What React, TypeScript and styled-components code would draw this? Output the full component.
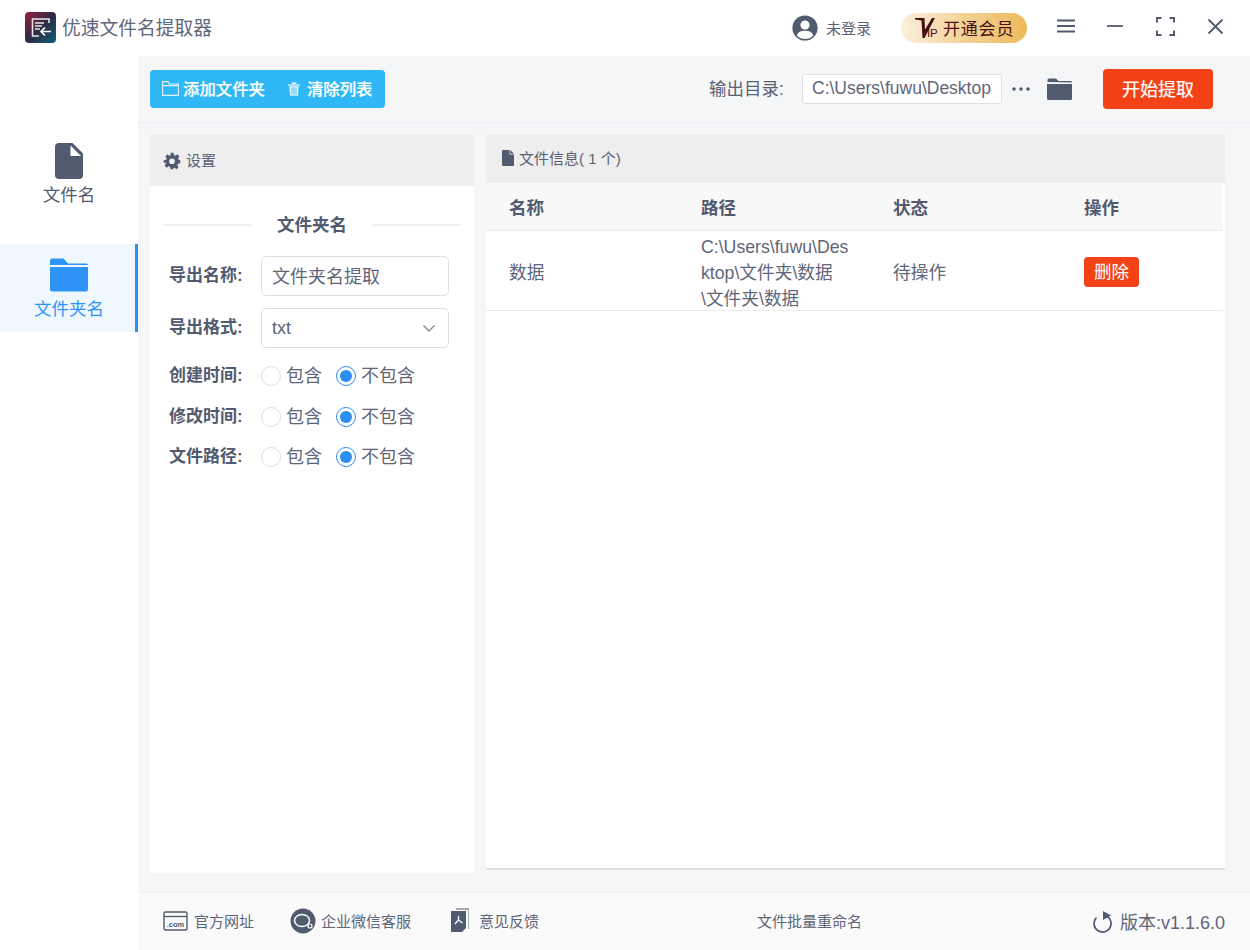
import React from 'react';
import styled, { createGlobalStyle } from 'styled-components';

const Global = createGlobalStyle`
  html, body { margin: 0; padding: 0; background: #fff; }
  * { box-sizing: border-box; }
  body { font-family: "Liberation Sans", "Noto Sans CJK SC", sans-serif; color: #515a6e; overflow: hidden; }
`;

const Win = styled.div`width: 1250px; height: 950px; display: flex; flex-direction: column; background: #fff;`;
const TitleBar = styled.header`height: 56px; flex: none; display: flex; align-items: center; padding: 0 26px 0 25px; background: #fff;`;
const Logo = styled.svg`width: 31px; height: 31px; flex: none; margin-top: -1px;`;
const AppName = styled.div`font-size: 18.75px; color: #60667a; margin-left: 6px; margin-top: -3px;`;
const UserIcon = styled.svg`width: 26px; height: 26px; margin-left: auto; flex: none; margin-top: -1px;`;
const UserName = styled.span`font-size: 15px; color: #5c6376; margin-left: 8px; width: 45px; white-space: nowrap; margin-top: -2px;`;
const VipPill = styled.div`
  width: 126px; height: 30px; margin-left: 30px; margin-top: -1px; border-radius: 15px; display: flex; align-items: center; padding-left: 14px;
  background: linear-gradient(90deg, #fbf0dd 0%, #f2cf8f 55%, #eeb95b 100%); color: #4a0f14;
`;
const VipMark = styled.svg`width: 20px; height: 20px; flex: none; margin-top: 1px;`;
const VipIp = styled.span`font-size: 11.5px; line-height: 1; align-self: flex-end; margin: 0 0 3px -8px; width: 11px; letter-spacing: -0.3px;`;
const VipText = styled.span`font-size: 17px; margin-left: 5px; letter-spacing: 0.8px; white-space: nowrap; margin-top: -1px;`;
const WinBtn = styled.svg<{ $ml: number; $w: number }>`
  width: ${p => p.$w}px; height: ${p => p.$w}px; margin-left: ${p => p.$ml}px; margin-top: -4px; flex: none;
`;

const Body = styled.div`flex: 1; display: flex; min-height: 0;`;
const Sidebar = styled.nav`width: 138px; flex: none; background: #fff; padding-top: 84px;`;
const NavItem = styled.div<{ $active?: boolean; $h: number; $pt: number }>`
  height: ${p => p.$h}px; padding-top: ${p => p.$pt}px; display: flex; flex-direction: column; align-items: center;
  padding-left: 3px;
  font-size: 17.5px; line-height: 24px;
  color: ${p => (p.$active ? '#2f94f8' : '#515a6e')};
  background: ${p => (p.$active ? '#eff8ff' : 'transparent')};
  border-right: 3px solid ${p => (p.$active ? '#2f8ff0' : 'transparent')};
`;
const NavFile = styled.svg`width: 28px; height: 36px; margin-bottom: 4px; display: block;`;
const NavFolder = styled.svg`width: 38px; height: 34px; margin-bottom: 5px; display: block;`;

const Main = styled.main`flex: 1; min-width: 0; display: flex; flex-direction: column; background: #f5f6f8;`;
const Toolbar = styled.div`height: 67px; flex: none; display: flex; align-items: center; padding: 0 37px 0 12px; border-bottom: 1px solid #eceef1;`;
const BlueGroup = styled.div`
  width: 235px; height: 38px; background: #30b8f6; border-radius: 4px; display: flex; align-items: center; padding-left: 12px;
  color: #fff; font-size: 16.4px; font-weight: 500; margin-top: -1px;
`;
const BlueIconFolder = styled.svg`width: 17px; height: 15px; flex: none; margin-right: 4px;`;
const BlueIconTrash = styled.svg`width: 12px; height: 14px; flex: none; margin-left: 23px; margin-right: 7px;`;
const BlueLabel = styled.span`white-space: nowrap; -webkit-text-stroke: 0.2px #fff; margin-top: -2px;`;
const OutLabel = styled.span`margin-left: auto; font-size: 17.5px; color: #5a6175; white-space: nowrap; width: 93px; margin-top: -4px;`;
const OutPath = styled.div`
  width: 200px; height: 30px; background: #fff; border: 1px solid #dcdfe6; border-radius: 3px; font-size: 17.5px; color: #5f6679;
  display: flex; align-items: center; padding: 0 0 1px 9px; white-space: nowrap; overflow: hidden;
`;
const Dots = styled.svg`width: 20px; height: 6px; margin-left: 9px; flex: none;`;
const OutFolder = styled.svg`width: 25px; height: 22px; margin-left: 16px; flex: none;`;
const StartBtn = styled.div`
  width: 110px; height: 40px; background: #f24216; border-radius: 4px; color: #fff; font-size: 18px; padding-bottom: 2px;
  -webkit-text-stroke: 0.2px #fff;
  display: flex; align-items: center; justify-content: center; margin-left: 31px; margin-top: -1px;
`;

const Content = styled.div`flex: 1; min-height: 0; display: flex; gap: 12px; padding: 12px 25px 19px 12px;`;
const SetPanel = styled.section`width: 324px; flex: none; background: #fff; display: flex; flex-direction: column;`;
const InfoPanel = styled.section`flex: 1; min-width: 0; background: #fff; display: flex; flex-direction: column; border-bottom: 2px solid #dfe0e6; margin-bottom: 3px;`;
const PanelHead = styled.div<{ $h: number; $pl: number }>`
  height: ${p => p.$h}px; flex: none; background: #eee; display: flex; align-items: center; padding-left: ${p => p.$pl}px;
  font-size: 15px; color: #5a6175; white-space: pre;
`;
const HeadText = styled.span`margin-top: -3px;`;
const GearIcon = styled.svg`width: 18px; height: 18px; margin-right: 5px; flex: none;`;
const SmallFile = styled.svg`width: 12px; height: 16px; margin-right: 5px; margin-top: -3px; flex: none;`;

const Form = styled.div`padding: 25px 13px 0;`;
const DivTitle = styled.div`
  display: flex; align-items: center; gap: 25px; font-size: 17.5px; font-weight: 700; color: #515a6e; line-height: 28px; margin-bottom: 17px;
  white-space: nowrap;
  &::before, &::after { content: ''; flex: 1; height: 2px; background: #eeeff1; margin-top: -1px; }
`;
const FieldRow = styled.div<{ $mb: number; $h: number }>`display: flex; align-items: center; height: ${p => p.$h}px; margin-bottom: ${p => p.$mb}px; padding-left: 6px;`;
const FieldLabel = styled.label`width: 92px; flex: none; font-size: 17px; font-weight: 700; color: #515a6e; white-space: nowrap; margin-top: -5px;`;
const TextBox = styled.div<{ $lift?: boolean }>`
  width: 188px; height: 40px; border: 1px solid #dcdee2; border-radius: 5px; background: #fff; font-size: 18px; color: #5f6679;
  display: flex; align-items: center; padding: 0 10px ${p => (p.$lift ? 2 : 0)}px;
`;
const Chevron = styled.svg`width: 14px; height: 14px; margin-left: auto; margin-right: 2px; flex: none;`;
const Radio = styled.span<{ $on?: boolean }>`
  width: 20px; height: 20px; border-radius: 50%; flex: none; background: #fff; border: 1px solid ${p => (p.$on ? '#2d8cf0' : '#dcdee2')};
  display: flex; align-items: center; justify-content: center;
  &::after { content: ''; width: 12px; height: 12px; border-radius: 50%; background: ${p => (p.$on ? '#2d8cf0' : 'transparent')}; }
`;
const RadioText = styled.span<{ $w: number }>`font-size: 18px; color: #5f6679; margin-left: 5px; width: ${p => p.$w}px; white-space: nowrap; margin-top: -4px;`;

const Table = styled.div`width: 737px;`;
const Row = styled.div<{ $h: number; $head?: boolean }>`
  display: grid; grid-template-columns: 192px 192px 191px 162px; height: ${p => p.$h}px; align-items: center;
  background: ${p => (p.$head ? '#f8f8f9' : '#fff')}; border-bottom: 1px solid #e8eaec;
  font-size: ${p => (p.$head ? 17.5 : 17.7)}px; font-weight: ${p => (p.$head ? 700 : 400)}; color: ${p => (p.$head ? '#515a6e' : '#5f6679')};
`;
const Cell = styled.div`padding-left: 23px; padding-right: 20px; line-height: 26px; word-break: break-all; margin-top: 3px;`;
const OpCell = styled(Cell)`margin-top: 0;`;
const DelBtn = styled.span`
  display: inline-flex; width: 55px; height: 30px; background: #f24216; border-radius: 4px; color: #fff; align-items: center; justify-content: center; font-size: 17.5px;
`;

const Footer = styled.footer`
  height: 58px; flex: none; background: #fafafa; border-top: 1px solid #eceef1; display: flex; align-items: center; padding: 0 25px 2px 25px;
  font-size: 15px; color: #5f6679;
`;
const FootLink = styled.div<{ $w: number }>`display: flex; align-items: center; width: ${p => p.$w}px; white-space: nowrap;`;
const FootIcon = styled.svg<{ $w: number; $mr: number }>`width: ${p => p.$w}px; height: 26px; margin-right: ${p => p.$mr}px; flex: none;`;
const FootTitle = styled.div`white-space: nowrap;`;
const Version = styled.div`margin-left: auto; display: flex; align-items: center; font-size: 18px; white-space: nowrap;`;
const VerIcon = styled.svg`width: 20px; height: 22px; margin-right: 7px; flex: none; margin-top: 2px;`;

const C = '#515a6e';

const RadioRow = ({ label }: { label: string }) => (
  <FieldRow $h={30} $mb={10.5}>
    <FieldLabel>{label}</FieldLabel>
    <Radio />
    <RadioText $w={50}>包含</RadioText>
    <Radio $on />
    <RadioText $w={60}>不包含</RadioText>
  </FieldRow>
);

export default function App() {
  return (
    <Win>
      <Global />
      <TitleBar>
        <Logo viewBox="0 0 31 31">
          <defs>
            <linearGradient id="lg" x1="0" y1="0" x2="1" y2="1">
              <stop offset="0" stopColor="#9a1f3e" />
              <stop offset="0.5" stopColor="#2e2b42" />
              <stop offset="1" stopColor="#0f6078" />
            </linearGradient>
          </defs>
          <rect width="31" height="31" rx="4" fill="url(#lg)" />
          <path d="M24 11V7H7.5v17H14" fill="none" stroke="#e9e6ea" strokeWidth="1.6" />
          <path d="M10 11h9M10 14h7M10 17h5" stroke="#e9e6ea" strokeWidth="1.7" />
          <path d="M26 19.5H16M20 15.5l-4 4 4 4" fill="none" stroke="#fff" strokeWidth="1.7" />
        </Logo>
        <AppName>优速文件名提取器</AppName>
        <UserIcon viewBox="0 0 26 26">
          <circle cx="13" cy="13" r="12.6" fill={C} />
          <circle cx="13" cy="10" r="4.6" fill="#fff" />
          <path d="M4.8 20.5C6 16.8 9 15.8 13 15.8s7 1 8.2 4.7C19 23 16.200 24 13 24s-6-1-8.200-3.500z" fill="#fff" />
        </UserIcon>
        <UserName>未登录</UserName>
        <VipPill>
          <VipMark viewBox="0 0 20 20">
            <path d="M0 0h9.500l.5 11.500L17 0h3L9.500 20H7.500L6.500 2.500 0 1.500z" fill="#4a0f14" />
          </VipMark>
          <VipIp>IP</VipIp>
          <VipText>开通会员</VipText>
        </VipPill>
        <WinBtn $ml={29} $w={20} viewBox="0 0 20 20">
          <path d="M1 4.500h18M1 10h18M1 15.500h18" stroke={C} strokeWidth="1.800" fill="none" />
        </WinBtn>
        <WinBtn $ml={30} $w={18} viewBox="0 0 18 18">
          <path d="M1 9h16" stroke={C} strokeWidth="1.800" />
        </WinBtn>
        <WinBtn $ml={32} $w={19} viewBox="0 0 19 19">
          <path d="M1 5.500V1h4.500M13.500 1H18v4.500M18 13.500V18h-4.500M5.500 18H1v-4.500" fill="none" stroke={C} strokeWidth="2" />
        </WinBtn>
        <WinBtn $ml={32} $w={17} viewBox="0 0 17 17">
          <path d="M1.500 1.500l14 14M15.500 1.500l-14 14" stroke={C} strokeWidth="1.800" />
        </WinBtn>
      </TitleBar>
      <Body>
        <Sidebar>
          <NavItem $h={104} $pt={3}>
            <NavFile viewBox="0 0 28 36">
              <path d="M4 0h13.500L28 10.500V32a4 4 0 0 1-4 4H4a4 4 0 0 1-4-4V4a4 4 0 0 1 4-4z" fill={C} />
              <path d="M15.500 2.500L26 13H15.500z" fill="#fff" />
            </NavFile>
            文件名
          </NavItem>
          <NavItem $active $h={88} $pt={14}>
            <NavFolder viewBox="0 0 38 34">
              <path d="M0 7V2.500A2 2 0 0 1 2 .5h11.500l4.500 5h18a2 2 0 0 1 2 2V7z" fill="#2f94f8" />
              <path d="M0 9h38v22.500a2 2 0 0 1-2 2H2a2 2 0 0 1-2-2z" fill="#2f94f8" />
            </NavFolder>
            文件夹名
          </NavItem>
        </Sidebar>
        <Main>
          <Toolbar>
            <BlueGroup>
              <BlueIconFolder viewBox="0 0 17 15">
                <path d="M.6 1.500V14.400h15.800V3H7.500L6 .6H.6zM.6 4.600h15.800" fill="none" stroke="#dff4ff" strokeWidth="1.100" />
              </BlueIconFolder>
              <BlueLabel>添加文件夹</BlueLabel>
              <BlueIconTrash viewBox="0 0 12 14">
                <path d="M0 2.500h12v1H0zM4 .5h4v1.500H4zM1.500 4.300h9l-.7 9.200H2.200z" fill="#dff4ff" stroke="#dff4ff" strokeWidth=".3" />
                <path d="M4 5.500v7M6 5.500v7M8 5.500v7" stroke="#30b8f6" strokeWidth=".8" />
              </BlueIconTrash>
              <BlueLabel>清除列表</BlueLabel>
            </BlueGroup>
            <OutLabel>输出目录:</OutLabel>
            <OutPath>C:\Users\fuwu\Desktop</OutPath>
            <Dots viewBox="0 0 20 6">
              <circle cx="3" cy="3" r="1.800" fill={C} />
              <circle cx="10" cy="3" r="1.800" fill={C} />
              <circle cx="17" cy="3" r="1.800" fill={C} />
            </Dots>
            <OutFolder viewBox="0 0 25 22">
              <path d="M.5 4V2A1.500 1.500 0 0 1 2 .5h7L11.500 3H23.500A1.500 1.500 0 0 1 25 4.500z" fill={C} />
              <path d="M0 6h25v14.500a1.500 1.500 0 0 1-1.500 1.500h-22A1.500 1.500 0 0 1 0 20.500z" fill={C} />
            </OutFolder>
            <StartBtn>开始提取</StartBtn>
          </Toolbar>
          <Content>
            <SetPanel>
              <PanelHead $h={51} $pl={13}>
                <GearIcon viewBox="0 0 24 24">
                  <path
                    fill={C}
                    fillRule="evenodd"
                    d="M10 1h4l.6 3.100 1.900.8 2.600-1.800 2.800 2.800-1.800 2.600.8 1.900L23 11v4l-3.100.6-.8 1.900 1.800 2.600-2.800 2.800-2.600-1.800-1.900.8L13 23h-3l-.6-3.100-1.900-.8-2.600 1.800-2.800-2.800 1.800-2.600-.8-1.900L1 15v-4l3.100-.6.800-1.900L3.100 5.900l2.800-2.800 2.600 1.800 1.900-.8zM12 8.500a3.800 3.800 0 1 0 0 7.600 3.800 3.800 0 0 0 0-7.600z"
                  />
                </GearIcon>
                <HeadText>设置</HeadText>
              </PanelHead>
              <Form>
                <DivTitle>文件夹名</DivTitle>
                <FieldRow $h={40} $mb={12}>
                  <FieldLabel>导出名称:</FieldLabel>
                  <TextBox $lift>文件夹名提取</TextBox>
                </FieldRow>
                <FieldRow $h={40} $mb={13}>
                  <FieldLabel>导出格式:</FieldLabel>
                  <TextBox>
                    txt
                    <Chevron viewBox="0 0 14 14">
                      <path d="M1.500 4.500L7 10l5.500-5.500" fill="none" stroke="#808695" strokeWidth="1.400" />
                    </Chevron>
                  </TextBox>
                </FieldRow>
                <RadioRow label="创建时间:" />
                <RadioRow label="修改时间:" />
                <RadioRow label="文件路径:" />
              </Form>
            </SetPanel>
            <InfoPanel>
              <PanelHead $h={48} $pl={16}>
                <SmallFile viewBox="0 0 12 16">
                  <path d="M1 0h6.500v4.500h4.500V15a1 1 0 0 1-1 1H1a1 1 0 0 1-1-1V1a1 1 0 0 1 1-1zM8.300 0L12 3.700H8.300z" fill={C} />
                </SmallFile>
                <HeadText>文件信息( 1 个)</HeadText>
              </PanelHead>
              <Table>
                <Row $head $h={48}>
                  <Cell>名称</Cell>
                  <Cell>路径</Cell>
                  <Cell>状态</Cell>
                  <Cell>操作</Cell>
                </Row>
                <Row $h={80}>
                  <Cell>数据</Cell>
                  <Cell>C:\Users\fuwu\Desktop\文件夹\数据\文件夹\数据</Cell>
                  <Cell>待操作</Cell>
                  <OpCell><DelBtn>删除</DelBtn></OpCell>
                </Row>
              </Table>
            </InfoPanel>
          </Content>
          <Footer>
            <FootLink $w={127}>
              <FootIcon $w={25} $mr={6} viewBox="0 0 25 26">
                <rect x="1" y="4" width="23" height="18" rx="1.500" fill="none" stroke={C} strokeWidth="1.400" />
                <path d="M1 8.500h23" stroke={C} strokeWidth="1.400" />
                <text x="12.500" y="18.500" fontSize="7.500" fontWeight="700" textAnchor="middle" fill={C} fontFamily="Liberation Sans">.com</text>
              </FootIcon>
              官方网址
            </FootLink>
            <FootLink $w={161}>
              <FootIcon $w={26} $mr={5} viewBox="0 0 26 26">
                <circle cx="13" cy="13" r="12.500" fill={C} />
                <ellipse cx="12" cy="12.500" rx="7.500" ry="6" fill="none" stroke="#fff" strokeWidth="1.500" />
                <circle cx="20" cy="18" r="2" fill="none" stroke="#fff" strokeWidth="1.200" />
              </FootIcon>
              企业微信客服
            </FootLink>
            <FootLink $w={306}>
              <FootIcon $w={18} $mr={10} viewBox="0 0 18 26">
                <path d="M5 1h13v20" fill="none" stroke="#8b91a0" strokeWidth="1.400" />
                <path d="M0 3h15v17l-4 4H0z" fill={C} />
                <path d="M7.500 8v4l-3.500 4M7.500 12l4 3" fill="none" stroke="#fff" strokeWidth="1.300" />
              </FootIcon>
              意见反馈
            </FootLink>
            <FootTitle>文件批量重命名</FootTitle>
            <Version>
              <VerIcon viewBox="0 0 20 22">
                <path d="M10 4A8.500 8.500 0 1 1 3.500 6.500" fill="none" stroke={C} strokeWidth="1.700" />
                <path d="M10 0l8 4.500-8 4.500z" fill={C} />
              </VerIcon>
              版本:v1.1.6.0
            </Version>
          </Footer>
        </Main>
      </Body>
    </Win>
  );
}
